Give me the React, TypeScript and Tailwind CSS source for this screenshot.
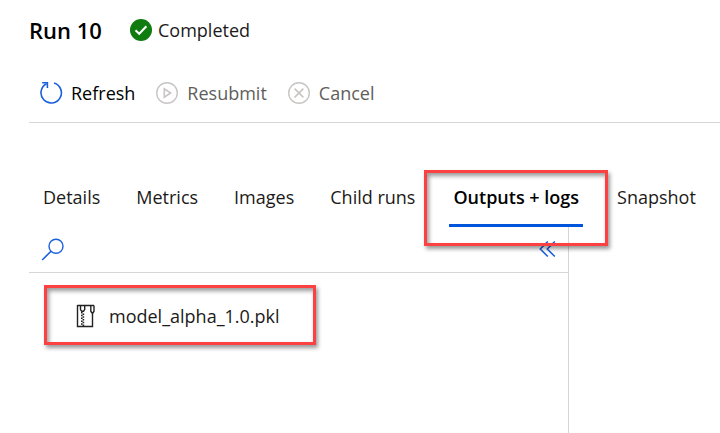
import type { ReactNode } from "react";

function Icon({ children, className = "" }: { children: ReactNode; className?: string }) {
  return (
    <svg
      viewBox="0 0 24 24"
      width="24"
      height="24"
      fill="none"
      stroke="currentColor"
      strokeWidth="1.4"
      aria-hidden="true"
      className={`shrink-0 ${className}`}
    >
      {children}
    </svg>
  );
}

function RefreshIcon() {
  return (
    <Icon className="text-[#1a5fdc]">
      <path d="M7.4 2.8A10.2 10.2 0 1 0 15 2" strokeWidth="1.6" />
      <path d="M3.2 1.8H8.4V7" strokeWidth="1.6" />
    </Icon>
  );
}

function ResubmitIcon() {
  return (
    <Icon className="text-[#c8c6c4]">
      <circle cx="12" cy="12" r="10.3" />
      <path d="M9.3 7.8V16.2L15.6 12Z" strokeWidth="1.6" />
    </Icon>
  );
}

function CancelIcon() {
  return (
    <Icon className="text-[#c8c6c4]">
      <circle cx="12" cy="12" r="10.3" />
      <path d="M7.6 7.6L16.4 16.4M16.4 7.6L7.6 16.4" strokeWidth="1.6" />
    </Icon>
  );
}

function SearchIcon() {
  return (
    <Icon className="text-[#1a5fdc]">
      <circle cx="15" cy="8.2" r="7" />
      <path d="M10 13.2L1.2 22" strokeWidth="1.6" />
    </Icon>
  );
}

function CollapseIcon() {
  return (
    <Icon className="text-[#1a5fdc]">
      <path d="M11.8 3.5L4.3 11L11.8 18.5M18.8 3.5L11.3 11L18.8 18.5" strokeWidth="1.6" />
    </Icon>
  );
}

function ZipIcon() {
  return (
    <Icon className="text-[#222222]">
      <path d="M4.5 1.5H21M4.5 1V22.5H19.5V9" />
      <path d="M7.5 1.8V5.6L8.7 7.2H10.5L11.7 5.6V1.8M17.8 1.8V7.2L18.8 8.7H20L21 7.2V1.5" />
      <path d="M8.8 8V22" strokeWidth="1.6" strokeDasharray="1.5 1.3" />
      <path d="M10.4 9.4V22" strokeWidth="1.6" strokeDasharray="1.5 1.3" />
    </Icon>
  );
}

const commands = [
  { label: "Refresh", icon: <RefreshIcon />, disabled: false },
  { label: "Resubmit", icon: <ResubmitIcon />, disabled: true },
  { label: "Cancel", icon: <CancelIcon />, disabled: true },
];

const tabs = ["Details", "Metrics", "Images", "Child runs", "Outputs + logs", "Snapshot"];
const activeTab = "Outputs + logs";

export default function App() {
  return (
    <main className="min-h-screen overflow-hidden bg-white pl-[29px] font-['Open_Sans','Noto_Sans',sans-serif] text-lg text-[#1b1a19]">
      <header className="flex h-[60px] items-center">
        <h1 className="w-[101px] text-[22px] font-semibold text-black">Run 10</h1>
        <svg viewBox="0 0 22 22" width="22" height="22" aria-hidden="true" className="mr-1.5">
          <circle cx="11" cy="11" r="11" fill="#107c10" />
          <path d="M5.5 11.3L9.2 14.8L16.4 7.2" fill="none" stroke="#fff" strokeWidth="2" />
        </svg>
        <span>Completed</span>
      </header>

      <div className="flex h-[63px] items-center gap-5 border-b border-[#d8d6d4] pt-1 pl-[10px]">
        {commands.map((c) => (
          <button
            key={c.label}
            type="button"
            disabled={c.disabled}
            className="flex items-center gap-2 text-black disabled:text-[#605e5c]"
          >
            {c.icon}
            {c.label}
          </button>
        ))}
      </div>

      <div role="tablist" className="mt-11 flex h-[60px] gap-8 pl-3">
        {tabs.map((t) => (
          <button
            key={t}
            type="button"
            role="tab"
            aria-selected={t === activeTab}
            className="relative shrink-0 border-y-3 border-transparent px-0.5 whitespace-nowrap aria-selected:border-b-[#0055dc] aria-selected:px-1 aria-selected:font-semibold aria-selected:text-black"
          >
            {t}
            {t === activeTab && (
              <span className="absolute -inset-x-[25px] top-0 -bottom-[22px] z-10 border-3 border-[#fb4141] shadow-[2px_3px_4px_rgba(0,0,0,0.4),inset_2px_3px_4px_rgba(0,0,0,0.4)]" />
            )}
          </button>
        ))}
      </div>

      <section className="min-h-[206px] w-[540px] border-r border-[#d8d6d4]">
        <div className="flex h-[46px] items-center justify-between border-b border-[#d8d6d4] pr-2 pl-3">
          <button type="button" aria-label="Search">
            <SearchIcon />
          </button>
          <button type="button" aria-label="Collapse panel">
            <CollapseIcon />
          </button>
        </div>
        <button
          type="button"
          className="mt-3 ml-[15px] flex h-[60px] w-[272px] items-center gap-3 border-3 border-[#fb4141] pt-0.5 pl-[26px] shadow-[2px_3px_4px_rgba(0,0,0,0.4),inset_2px_3px_4px_rgba(0,0,0,0.4)]"
        >
          <ZipIcon />
          model_alpha_1.0.pkl
        </button>
      </section>
    </main>
  );
}
